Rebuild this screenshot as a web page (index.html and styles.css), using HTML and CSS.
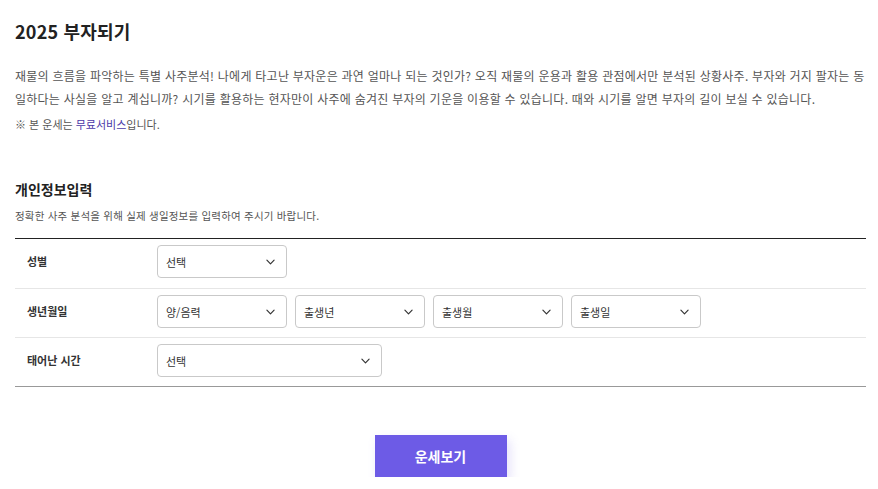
FILE: index.html
```html
<!DOCTYPE html>
<html lang="ko">
<head>
<meta charset="utf-8">
<title>2025 부자되기</title>
<link rel="stylesheet" href="styles.css">
</head>
<body>
<div class="page">
  <h1 class="title">2025 부자되기</h1>
  <p class="desc">재물의 흐름을 파악하는 특별 사주분석! 나에게 타고난 부자운은 과연 얼마나 되는 것인가? 오직 재물의 운용과 활용 관점에서만 분석된 상황사주. 부자와 거지 팔자는 동일하다는 사실을 알고 계십니까? 시기를 활용하는 현자만이 사주에 숨겨진 부자의 기운을 이용할 수 있습니다. 때와 시기를 알면 부자의 길이 보실 수 있습니다.</p>
  <p class="note">※ 본 운세는 <span class="free">무료서비스</span>입니다.</p>

  <h2 class="section-title">개인정보입력</h2>
  <p class="section-sub">정확한 사주 분석을 위해 실제 생일정보를 입력하여 주시기 바랍니다.</p>

  <div class="form">
    <div class="row">
      <div class="label">성별</div>
      <div class="fields">
        <div class="select"><span>선택</span><svg class="chev" viewBox="0 0 10 6" width="9" height="6"><path d="M1 1 L5 5 L9 1" fill="none" stroke="#333" stroke-width="1.3" stroke-linecap="round" stroke-linejoin="round"/></svg></div>
      </div>
    </div>
    <div class="row">
      <div class="label">생년월일</div>
      <div class="fields">
        <div class="select"><span>양/음력</span><svg class="chev" viewBox="0 0 10 6" width="9" height="6"><path d="M1 1 L5 5 L9 1" fill="none" stroke="#333" stroke-width="1.3" stroke-linecap="round" stroke-linejoin="round"/></svg></div>
        <div class="select"><span>출생년</span><svg class="chev" viewBox="0 0 10 6" width="9" height="6"><path d="M1 1 L5 5 L9 1" fill="none" stroke="#333" stroke-width="1.3" stroke-linecap="round" stroke-linejoin="round"/></svg></div>
        <div class="select"><span>출생월</span><svg class="chev" viewBox="0 0 10 6" width="9" height="6"><path d="M1 1 L5 5 L9 1" fill="none" stroke="#333" stroke-width="1.3" stroke-linecap="round" stroke-linejoin="round"/></svg></div>
        <div class="select"><span>출생일</span><svg class="chev" viewBox="0 0 10 6" width="9" height="6"><path d="M1 1 L5 5 L9 1" fill="none" stroke="#333" stroke-width="1.3" stroke-linecap="round" stroke-linejoin="round"/></svg></div>
      </div>
    </div>
    <div class="row">
      <div class="label">태어난 시간</div>
      <div class="fields">
        <div class="select wide"><span>선택</span><svg class="chev" viewBox="0 0 10 6" width="9" height="6"><path d="M1 1 L5 5 L9 1" fill="none" stroke="#333" stroke-width="1.3" stroke-linecap="round" stroke-linejoin="round"/></svg></div>
      </div>
    </div>
  </div>

  <div class="actions">
    <button class="btn" type="button">운세보기</button>
  </div>
</div>
</body>
</html>
```

FILE: styles.css
```css
* { box-sizing: border-box; }
html, body { margin: 0; padding: 0; background: #fff; }
body {
  font-family: "Noto Sans CJK KR", "Noto Sans", sans-serif;
  color: #333;
}
.page { padding: 0 12px 0 15px; }
.title {
  margin: 19px 0 0;
  font-size: 18px;
  line-height: 24px;
  font-weight: 700;
  color: #222;
  letter-spacing: 0.2px;
}
.desc {
  margin: 21px 0 0;
  font-size: 12px;
  line-height: 23px;
  color: #555;
  letter-spacing: 0.25px;
}
.note {
  margin: 4px 0 0;
  font-size: 11px;
  line-height: 20px;
  color: #555;
}
.free { color: #4b3aa8; }
.section-title {
  margin: 44px 0 0;
  font-size: 14px;
  line-height: 22px;
  font-weight: 700;
  color: #222;
}
.section-sub {
  margin: 7px 0 0;
  font-size: 10.5px;
  line-height: 18px;
  color: #555;
  letter-spacing: 0.2px;
}
.form {
  margin-top: 13px;
  border-top: 1px solid #222;
  border-bottom: 1px solid #999;
}
.row {
  display: flex;
  align-items: flex-start;
  padding: 6px 0 9px;
}
.row:first-child { padding-bottom: 10px; }
.row + .row { border-top: 1px solid #e6e6e6; }
.label {
  width: 142px;
  padding-left: 12px;
  font-size: 11px;
  line-height: 33px;
  font-weight: 700;
  color: #333;
}
.fields { display: flex; gap: 8px; }
.select {
  width: 130px;
  height: 33px;
  border: 1px solid #c9c9c9;
  border-radius: 4px;
  display: flex;
  align-items: center;
  justify-content: space-between;
  padding: 0 11px 0 8px;
  font-size: 11px;
  color: #333;
  background: #fff;
}
.select.wide { width: 225px; }
.chev { display: block; }
.actions {
  display: flex;
  justify-content: center;
  margin-top: 48px;
}
.btn {
  width: 132px;
  height: 42px;
  border: 0;
  background: #6d5be6;
  color: #fff;
  font-family: "Noto Sans CJK KR", "Noto Sans", sans-serif;
  font-size: 14px;
  font-weight: 700;
  box-shadow: 3px 5px 10px rgba(120, 100, 230, 0.2);
}
```
